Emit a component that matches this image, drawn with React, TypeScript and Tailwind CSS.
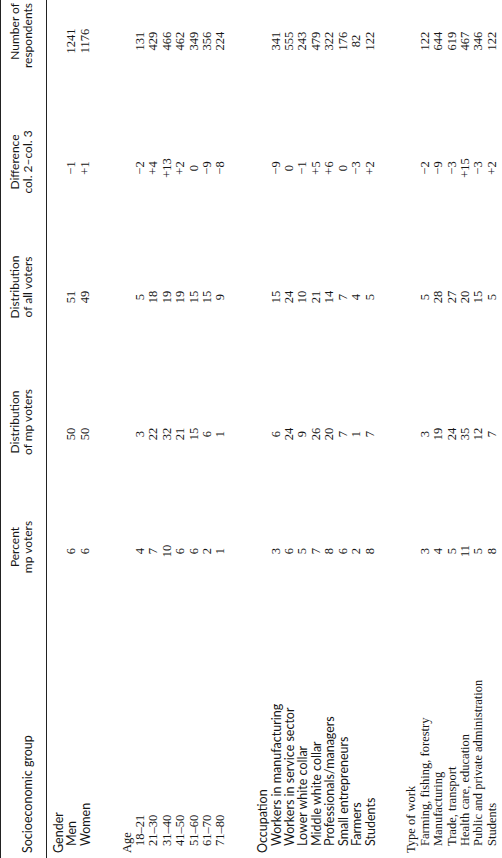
import React from "react";

type Row = { label: string; v: [string, string, string, string, string] };
type Group = { title: string; sans: boolean; rows: Row[] };

const groups: Group[] = [
  {
    title: "Gender",
    sans: true,
    rows: [
      { label: "Men", v: ["6", "50", "51", "\u22121", "1241"] },
      { label: "Women", v: ["6", "50", "49", "+1", "1176"] },
    ],
  },
  {
    title: "Age",
    sans: false,
    rows: [
      { label: "18\u201321", v: ["4", "3", "5", "\u22122", "131"] },
      { label: "21\u201330", v: ["7", "22", "18", "+4", "429"] },
      { label: "31\u201340", v: ["10", "32", "19", "+13", "466"] },
      { label: "41\u201350", v: ["6", "21", "19", "+2", "462"] },
      { label: "51\u201360", v: ["6", "15", "15", "0", "349"] },
      { label: "61\u201370", v: ["2", "6", "15", "\u22129", "356"] },
      { label: "71\u201380", v: ["1", "1", "9", "\u22128", "224"] },
    ],
  },
  {
    title: "Occupation",
    sans: true,
    rows: [
      { label: "Workers in manufacturing", v: ["3", "6", "15", "\u22129", "341"] },
      { label: "Workers in service sector", v: ["6", "24", "24", "0", "555"] },
      { label: "Lower white collar", v: ["5", "9", "10", "\u22121", "243"] },
      { label: "Middle white collar", v: ["7", "26", "21", "+5", "479"] },
      { label: "Professionals/managers", v: ["8", "20", "14", "+6", "322"] },
      { label: "Small entrepreneurs", v: ["6", "7", "7", "0", "176"] },
      { label: "Farmers", v: ["2", "1", "4", "\u22123", "82"] },
      { label: "Students", v: ["8", "7", "5", "+2", "122"] },
    ],
  },
  {
    title: "Type of work",
    sans: false,
    rows: [
      { label: "Farming, fishing, forestry", v: ["3", "3", "5", "\u22122", "122"] },
      { label: "Manufacturing", v: ["4", "19", "28", "\u22129", "644"] },
      { label: "Trade, transport", v: ["5", "24", "27", "\u22123", "619"] },
      { label: "Health care, education", v: ["11", "35", "20", "+15", "467"] },
      { label: "Public and private administration", v: ["5", "12", "15", "\u22123", "346"] },
      { label: "Students", v: ["8", "7", "5", "+2", "122"] },
    ],
  },
];

const GRID = "grid grid-cols-[249px_124px_126px_144px_106px_109px]";
const SANS = "font-['Lato','Liberation_Sans',sans-serif]";
const SERIF = "font-['Liberation_Serif','Times_New_Roman',serif]";

function Nums({ v }: { v: Row["v"] }) {
  return (
    <>
      <div className={`text-center pr-[8px] ${SERIF}`}>{v[0]}</div>
      <div className={`text-center pr-[24px] ${SERIF}`}>{v[1]}</div>
      <div className={`text-center pr-[20px] ${SERIF}`}>{v[2]}</div>
      <div className={`text-center pr-[12px] ${SERIF}`}>{v[3]}</div>
      <div className={`text-center pl-[52px] pr-[25px] ${SERIF}`}>{v[4]}</div>
    </>
  );
}

export default function App() {
  return (
    <div className="w-[502px] h-[858px] overflow-hidden bg-white">
      <div className="w-[858px] h-[502px] origin-top-left -rotate-90 translate-y-[858px] text-[#161616]">
        <div className="border-t-[1.5px] border-[#222]" />
        <div className={`${GRID} pt-[7px] pb-[12px] text-[12px] leading-[13px] ${SANS}`}>
          <div className="pl-[5px] flex items-end text-[12.5px]">Socioeconomic group</div>
          <div className="text-center">
            <div>Percent</div>
            <div>mp voters</div>
          </div>
          <div className="text-center">
            <div>Distribution</div>
            <div>of mp voters</div>
          </div>
          <div className="text-center">
            <div>Distribution</div>
            <div>of all voters</div>
          </div>
          <div className="text-center">
            <div>Difference</div>
            <div>col. 2&ndash;col. 3</div>
          </div>
          <div className="text-right pr-[3px] whitespace-nowrap">
            <div>Number of</div>
            <div>respondents</div>
          </div>
        </div>
        <div className="border-t-[1.5px] border-[#222]" />
        <div className="flex flex-col gap-[28.5px] pt-[4.8px] leading-[13.4px]">
          {groups.map((g) => {
            const font = g.sans ? `${SANS} text-[12.5px]` : `${SERIF} text-[12.5px]`;
            return (
              <div key={g.title} className="flex flex-col">
                <div className={`${GRID}`}>
                  <div className={`pl-[5px] ${font}`}>{g.title}</div>
                </div>
                {g.rows.map((r, i) => (
                  <div key={i} className={`${GRID} text-[12.5px]`}>
                    <div className={`pl-[12px] whitespace-nowrap ${font}`}>{r.label}</div>
                    <Nums v={r.v} />
                  </div>
                ))}
              </div>
            );
          })}
        </div>
      </div>
    </div>
  );
}
